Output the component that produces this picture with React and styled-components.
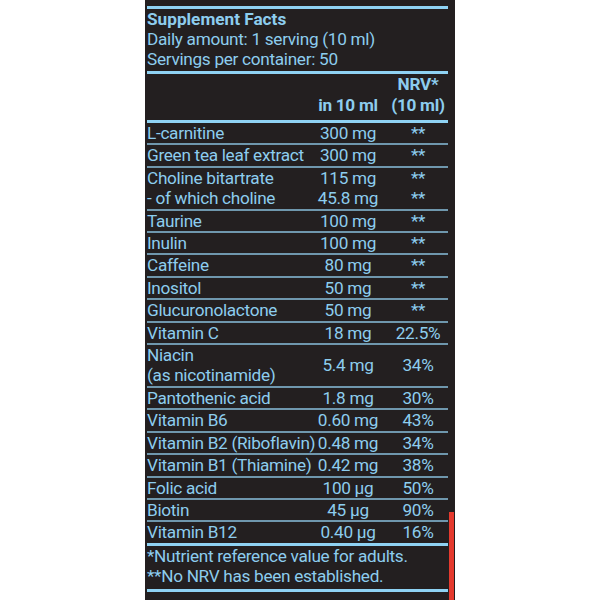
import styled, {createGlobalStyle} from 'styled-components'

const GlobalStyle = createGlobalStyle`
  body {
    margin: 0;
    background: #ffffff;
  }
`

const rows = [
  {name: 'L-carnitine', amount: '300 mg', nrv: '**'},
  {name: 'Green tea leaf extract', amount: '300 mg', nrv: '**'},
  {name: ['Choline bitartrate', '- of which choline'], amount: ['115 mg', '45.8 mg'], nrv: ['**', '**']},
  {name: 'Taurine', amount: '100 mg', nrv: '**'},
  {name: 'Inulin', amount: '100 mg', nrv: '**'},
  {name: 'Caffeine', amount: '80 mg', nrv: '**'},
  {name: 'Inositol', amount: '50 mg', nrv: '**'},
  {name: 'Glucuronolactone', amount: '50 mg', nrv: '**'},
  {name: 'Vitamin C', amount: '18 mg', nrv: '22.5%'},
  {name: ['Niacin', '(as nicotinamide)'], amount: '5.4 mg', nrv: '34%'},
  {name: 'Pantothenic acid', amount: '1.8 mg', nrv: '30%'},
  {name: 'Vitamin B6', amount: '0.60 mg', nrv: '43%'},
  {name: 'Vitamin B2 (Riboflavin)', amount: '0.48 mg', nrv: '34%'},
  {name: 'Vitamin B1 (Thiamine)', amount: '0.42 mg', nrv: '38%'},
  {name: 'Folic acid', amount: '100 µg', nrv: '50%'},
  {name: 'Biotin', amount: '45 µg', nrv: '90%'},
  {name: 'Vitamin B12', amount: '0.40 µg', nrv: '16%'},
]

function lines(value) {
  if (Array.isArray(value)) {
    return value.map((text) => <div key={text}>{text}</div>)
  }
  return value
}

export default function App() {
  return (
    <Page>
      <GlobalStyle />
      <Label>
        <Intro>
          <Title>Supplement Facts</Title>
          <div>Daily amount: 1 serving (10 ml)</div>
          <div>Servings per container: 50</div>
        </Intro>
        <HeadRow>
          <div />
          <Amount>in 10 ml</Amount>
          <Nrv>NRV*<br />(10 ml)</Nrv>
        </HeadRow>
        <Table>
          {rows.map((row, i) => (
            <Row key={i}>
              <Name>{lines(row.name)}</Name>
              <Amount>{lines(row.amount)}</Amount>
              <Nrv>{lines(row.nrv)}</Nrv>
            </Row>
          ))}
        </Table>
        <Notes>
          <div>*Nutrient reference value for adults.</div>
          <div>**No NRV has been established.</div>
        </Notes>
        <RedEdge />
      </Label>
    </Page>
  )
}

const Page = styled.div`
  display: flex;
  justify-content: center;
  min-height: 600px;
  background: #ffffff;
`

const Label = styled.div`
  position: relative;
  width: 310px;
  height: 600px;
  box-sizing: border-box;
  padding: 6px 7px 0 2px;

  background: #231f20;
  color: #8dcdee;
  font-family: Roboto, "Liberation Sans", Arial, sans-serif;
  font-size: 17.2px;
  line-height: 20px;
  letter-spacing: -0.3px;
`

const Intro = styled.div`
  border-top: 3px solid #8fd2f3;
  border-bottom: 3px solid #8fd2f3;
  padding-bottom: 2px;
`

const Title = styled.div`
  font-weight: bold;
  letter-spacing: 0;
`

const grid = `
  display: grid;
  grid-template-columns: 164px 74px 1fr;
`

const HeadRow = styled.div`
  ${grid}
  align-items: end;
  padding-bottom: 4px;
  border-bottom: 3px solid #8fd2f3;

  font-weight: bold;
  line-height: 21px;
`

const Table = styled.div`
  border-bottom: 3px solid #8fd2f3;
`

const Row = styled.div`
  ${grid}
  align-items: center;
  line-height: 20.4px;
  border-bottom: 2px solid #6f97ad;

  &:last-child {
    border-bottom: none;
  }
`

const Name = styled.div`
  white-space: nowrap;
`

const Amount = styled.div`
  text-align: center;
  white-space: nowrap;
`

const Nrv = styled.div`
  padding-left: 3px;
  text-align: center;
  white-space: nowrap;
`

const Notes = styled.div`
  padding-bottom: 3px;
  border-bottom: 3px solid #8fd2f3;
`

const RedEdge = styled.div`
  position: absolute;
  right: 1px;
  bottom: 0;
  width: 5px;
  height: 88px;
  background: #e53a2e;
`
